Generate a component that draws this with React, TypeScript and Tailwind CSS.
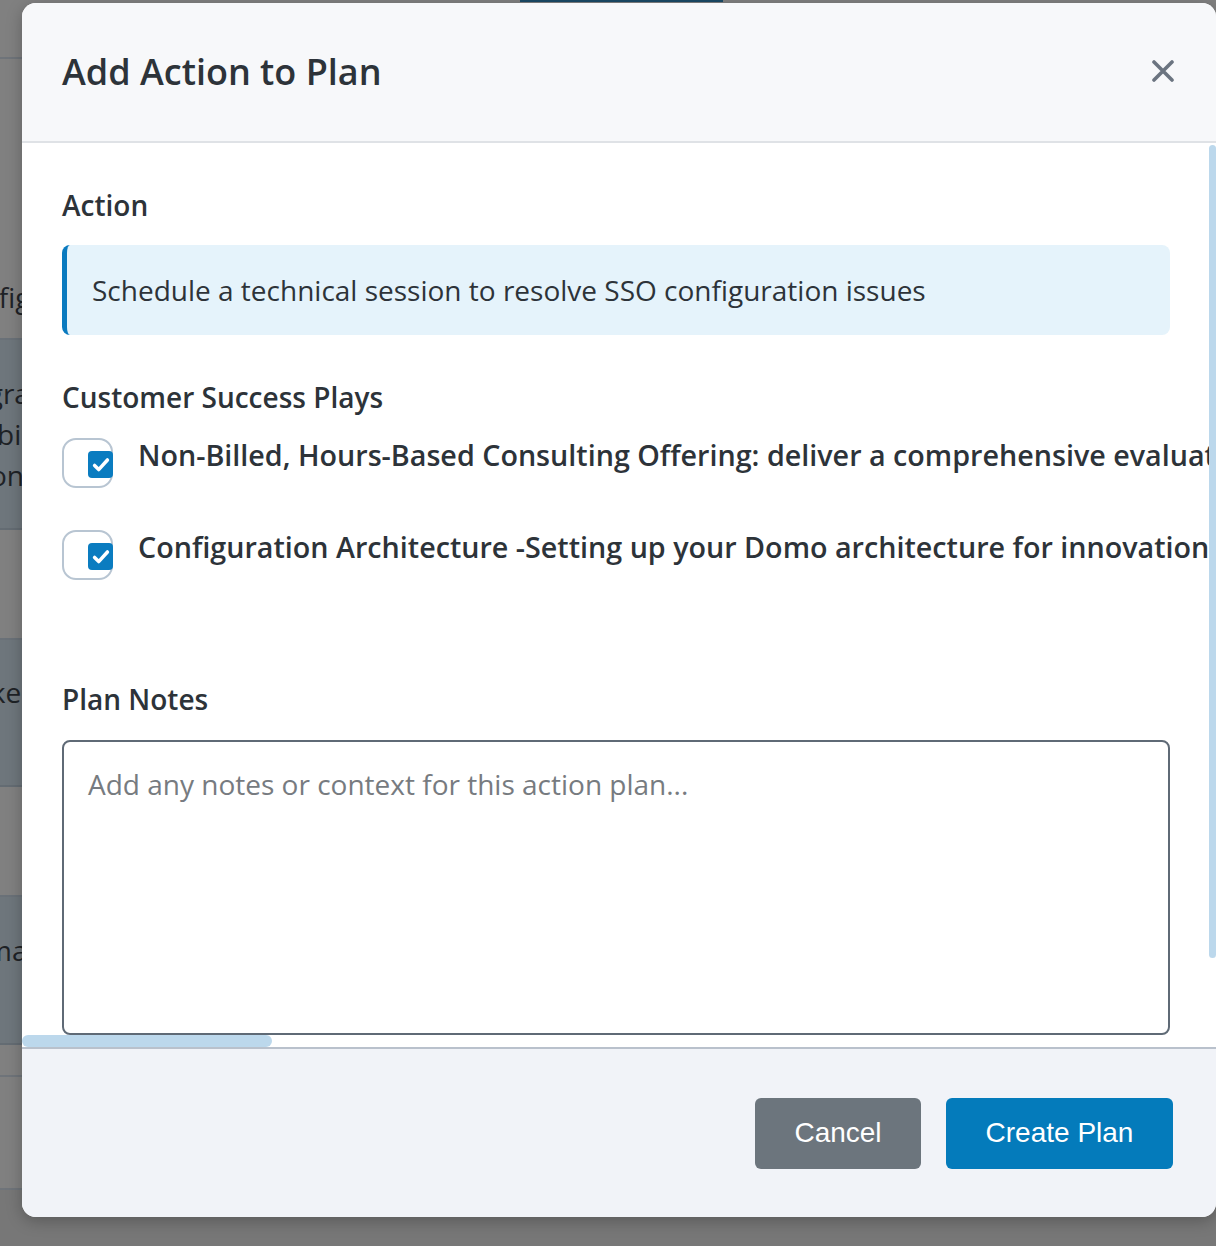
import React from 'react';

const plays = [
  'Non-Billed, Hours-Based Consulting Offering: deliver a comprehensive evaluation of your current Domo implementation',
  'Configuration Architecture -Setting up your Domo architecture for innovation and long-term scale',
];

// The page that sits behind the dimmed overlay; only a thin strip of it shows.
const PageBehind: React.FC = () => (
  <div className="flex h-full flex-col font-['Open_Sans',sans-serif] text-[28px] leading-[41px] text-[#1e2226]">
    <div className="h-[59px] shrink-0 border-b-2 border-[#6f747a]">
      <div className="ml-[520px] h-[2px] w-[203px] bg-[#1b4a66]" />
    </div>
    <div className="flex h-[281px] shrink-0 items-end pb-[20px] border-b-2 border-[#6a7178]">
      <span className="-ml-[53px] whitespace-nowrap">Configuration</span>
    </div>
    <div className="flex h-[190px] shrink-0 flex-col justify-center bg-[#6e767c] border-b-2 border-[#646c73]">
      <span className="-ml-[63px] whitespace-nowrap">Integration</span>
      <span className="-ml-[3px] whitespace-nowrap">billing</span>
      <span className="-ml-[10px] whitespace-nowrap">onboarding</span>
    </div>
    <div className="h-[110px] shrink-0 border-b-2 border-[#6a7178]" />
    <div className="flex h-[147px] shrink-0 items-start bg-[#6e767c] pt-[32px] border-b-2 border-[#646c73]">
      <span className="-ml-[50px] whitespace-nowrap">Make</span>
    </div>
    <div className="h-[110px] shrink-0 border-b-2 border-[#6a7178]" />
    <div className="flex h-[148px] shrink-0 items-start bg-[#6e767c] pt-[33px] border-b-2 border-[#646c73]">
      <span className="-ml-[14px] whitespace-nowrap">manage</span>
    </div>
    <div className="h-[32px] shrink-0 border-b-2 border-[#6f747a]" />
    <div className="h-[113px] shrink-0 border-b-2 border-[#6f747a]" />
    <div className="flex-1 bg-[#777777]" />
  </div>
);

const CheckBox: React.FC = () => (
  <div className="relative h-[50px] w-[51px] shrink-0 rounded-[14px] border-2 border-[#b8c5d2] bg-white">
    <span className="absolute left-[24px] top-[11px] flex h-[27px] w-[25px] items-center justify-center rounded-[4px] bg-[#0a7cc0]">
      <svg viewBox="0 0 24 24" className="h-[22px] w-[22px]" fill="none" stroke="white" strokeWidth={3.8} strokeLinecap="round" strokeLinejoin="round">
        <path d="M5 12.5l4.5 4.5L19 6.5" />
      </svg>
    </span>
  </div>
);

export default function App() {
  return (
    <div className="relative h-[1246px] w-[1216px] overflow-hidden bg-[#808080]">
      <PageBehind />

      {/* Modal */}
      <div className="absolute left-[22px] top-[3px] flex h-[1214px] w-[1194px] flex-col overflow-hidden rounded-[14px] bg-white font-['Open_Sans',sans-serif] text-[#2d3339] shadow-[0_4px_16px_rgba(0,0,0,0.25)]">
        {/* Header */}
        <div className="flex h-[140px] shrink-0 items-center justify-between border-b-2 border-[#dfe2e6] bg-[#f7f8fa] pl-[40px] pr-[42px]">
          <h2 className="text-[36px] font-semibold leading-[48px]">Add Action to Plan</h2>
          <svg viewBox="0 0 22 22" className="-mt-[3px] h-[22px] w-[22px]" fill="none" stroke="#6b7480" strokeWidth={3.6} strokeLinecap="round">
            <path d="M2 2L20 20M20 2L2 20" />
          </svg>
        </div>

        {/* Body */}
        <div className="relative flex-1 overflow-hidden">
          <div className="pl-[40px] pr-[46px] pt-[44px]">
            <div className="text-[28px] font-semibold leading-[36px]">Action</div>
            <div className="mt-[22px] flex h-[90px] items-center rounded-[8px] border-l-[5px] border-[#0a7abf] bg-[#e5f3fb] pl-[25px] text-[28px] leading-[36px]">
              Schedule a technical session to resolve SSO configuration issues
            </div>

            <div className="mt-[44px] text-[28px] font-semibold leading-[36px]">Customer Success Plays</div>
            <div className="mt-[23px] flex flex-col gap-[42px]">
              {plays.map((p) => (
                <label key={p} className="flex items-start gap-[25px]">
                  <CheckBox />
                  <span className="-mt-[1px] whitespace-nowrap text-[28.7px] font-semibold leading-[36px]">{p}</span>
                </label>
              ))}
            </div>

            <div className="mt-[101px] text-[28px] font-semibold leading-[36px]">Plan Notes</div>
            <textarea
              className="mt-[23px] block h-[295px] w-full resize-none rounded-[8px] border-2 border-[#5f6a76] px-[24px] pt-[24px] text-[28px] leading-[36px] text-[#2d3339] outline-none placeholder:text-[#777b80]"
              placeholder="Add any notes or context for this action plan..."
            />
            <div className="h-[40px]" />
          </div>

          {/* scrollbar thumbs */}
          <div className="absolute right-0 top-[2px] h-[813px] w-[7px] rounded-full bg-[#bcd8ec]" />
          <div className="absolute bottom-0 left-0 h-[12px] w-[250px] rounded-full bg-[#bcd8ec]" />
        </div>

        {/* Footer */}
        <div className="flex h-[170px] shrink-0 items-center justify-end gap-[25px] border-t-2 border-[#b9c1cc] bg-[#f1f3f8] pr-[43px] font-['Liberation_Sans',Arial,sans-serif] text-[28px] text-white">
          <button className="h-[71px] w-[166px] rounded-[6px] bg-[#6c757d]">Cancel</button>
          <button className="h-[71px] w-[227px] rounded-[6px] bg-[#047bbb]">Create Plan</button>
        </div>
      </div>
    </div>
  );
}
